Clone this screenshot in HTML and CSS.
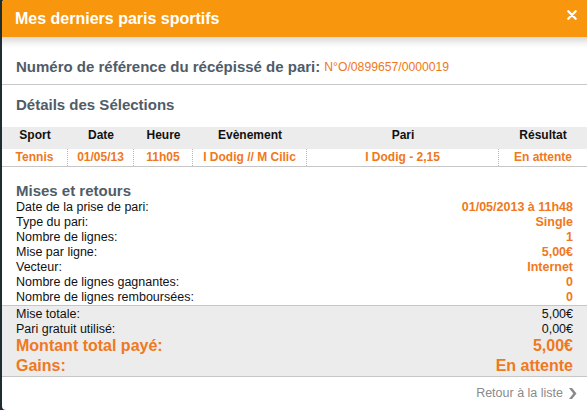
FILE: index.html
```html
<!DOCTYPE html>
<html lang="fr">
<head>
<meta charset="utf-8">
<title>Mes derniers paris sportifs</title>
<link rel="stylesheet" href="styles.css">
</head>
<body>
<div class="dialog">
  <header class="hd">
    <h1 class="hd-title">Mes derniers paris sportifs</h1>
    <span class="hd-close" aria-label="Fermer">
      <svg width="10" height="10" viewBox="0 0 10 10"><path d="M1.3 1.3 L8.7 8.7 M8.7 1.3 L1.3 8.7" stroke="#fff" stroke-width="2.3" stroke-linecap="round"/></svg>
    </span>
  </header>
  <div class="hd-shadow"></div>

  <div class="ref">
    <span class="ref-label">Numéro de référence du récépissé de pari:</span>
    <span class="ref-value">N°O/0899657/0000019</span>
  </div>

  <h2 class="section-title sel-title">Détails des Sélections</h2>

  <div class="sel-table">
    <div class="th">Sport</div>
    <div class="th">Date</div>
    <div class="th">Heure</div>
    <div class="th">Evènement</div>
    <div class="th">Pari</div>
    <div class="th">Résultat</div>
    <div class="td">Tennis</div>
    <div class="td">01/05/13</div>
    <div class="td">11h05</div>
    <div class="td">I Dodig // M Cilic</div>
    <div class="td">I Dodig - 2,15</div>
    <div class="td td-last">En attente</div>
  </div>

  <h2 class="section-title mises-title">Mises et retours</h2>
  <div class="kv-list">
    <div class="kv"><span>Date de la prise de pari:</span><span class="v">01/05/2013 à 11h48</span></div>
    <div class="kv"><span>Type du pari:</span><span class="v">Single</span></div>
    <div class="kv"><span>Nombre de lignes:</span><span class="v">1</span></div>
    <div class="kv"><span>Mise par ligne:</span><span class="v">5,00€</span></div>
    <div class="kv"><span>Vecteur:</span><span class="v">Internet</span></div>
    <div class="kv"><span>Nombre de lignes gagnantes:</span><span class="v">0</span></div>
    <div class="kv"><span>Nombre de lignes remboursées:</span><span class="v">0</span></div>
  </div>

  <div class="totals">
    <div class="kv"><span>Mise totale:</span><span>5,00€</span></div>
    <div class="kv"><span>Pari gratuit utilisé:</span><span>0,00€</span></div>
    <div class="kv big big-first"><span>Montant total payé:</span><span>5,00€</span></div>
    <div class="kv big"><span>Gains:</span><span>En attente</span></div>
  </div>

  <div class="footer">
    <a class="back" href="#">Retour à la liste
      <svg width="9" height="11" viewBox="0 0 9 11"><path d="M1 0 L4 0 L8.5 5.5 L4 11 L1 11 L5.3 5.5 Z" fill="#8a8a8a"/></svg>
    </a>
  </div>
</div>
</body>
</html>
```

FILE: styles.css
```css
html, body {
  margin: 0;
  padding: 0;
}
body {
  background: #1f2d31;
  font-family: "Liberation Sans", Arial, sans-serif;
  width: 587px;
  height: 410px;
  overflow: hidden;
}
.dialog {
  margin-left: 2px;
  height: 410px;
  background: #fff;
  display: flex;
  flex-direction: column;
  border-top-left-radius: 3px;
  border-bottom-left-radius: 4px;
}
.hd {
  height: 37px;
  background: #f8960e;
  display: flex;
  align-items: center;
  justify-content: space-between;
  padding: 0 10px 0 13px;
  flex-shrink: 0;
  border-top-left-radius: 3px;
}
.hd-title {
  margin: 0;
  font-size: 16px;
  font-weight: bold;
  color: #fff;
  line-height: 20px;
  padding-top: 1px;
}
.hd-close {
  display: flex;
  margin-bottom: 8px;
}
.hd-shadow {
  height: 11px;
  background: linear-gradient(#d9d9d9, #f4f4f4 60%, #fff);
  flex-shrink: 0;
}
.ref {
  padding: 0 14px;
  height: 35px;
  display: flex;
  align-items: center;
  gap: 4px;
  border-bottom: 1px solid #c9c9c9;
  margin-top: 1px;
}
.ref-label {
  font-size: 15px;
  font-weight: bold;
  color: #505c68;
}
.ref-value {
  font-size: 12.2px;
  color: #f07820;
  padding-top: 1px;
}
.section-title {
  margin: 0;
  font-size: 15px;
  font-weight: bold;
  color: #505c68;
  padding: 0 14px;
  line-height: 18px;
}
.sel-title {
  margin-top: 11px;
}
.sel-table {
  margin-top: 13px;
  display: grid;
  grid-template-columns: 66px 66px 59px 114px 192px 1fr;
  border-bottom: 1px solid #c6c6c6;
}
.th {
  background: #ececec;
  font-size: 12px;
  font-weight: bold;
  color: #111;
  text-align: center;
  height: 22px;
  line-height: 17px;
}
.td {
  font-size: 12px;
  font-weight: bold;
  color: #f07820;
  text-align: center;
  height: 17px;
  line-height: 17px;
  border-right: 1px dotted #b8b8b8;
}
.td-last {
  border-right: 0;
}
.mises-title {
  margin-top: 15px;
  line-height: 17px;
}
.kv-list {
  padding: 0 14px;
  margin-top: 1px;
}
.kv {
  display: flex;
  justify-content: space-between;
  font-size: 12.5px;
  line-height: 15px;
  color: #111;
}
.kv .v {
  color: #f07820;
  font-weight: bold;
}
.totals {
  background: #ececec;
  border-top: 1px solid #c6c6c6;
  border-bottom: 1px solid #c6c6c6;
  padding: 1px 14px 0 14px;
}
.totals .kv.big {
  font-size: 16px;
  font-weight: bold;
  color: #f07820;
  line-height: 20px;
}
.totals .kv.big-first {
  margin-top: -1px;
}
.footer {
  display: flex;
  justify-content: flex-end;
  padding: 9px 10px 0 0;
}
.back {
  font-size: 12.5px;
  color: #8a8a8a;
  text-decoration: none;
  display: flex;
  align-items: center;
  gap: 5px;
}
```
